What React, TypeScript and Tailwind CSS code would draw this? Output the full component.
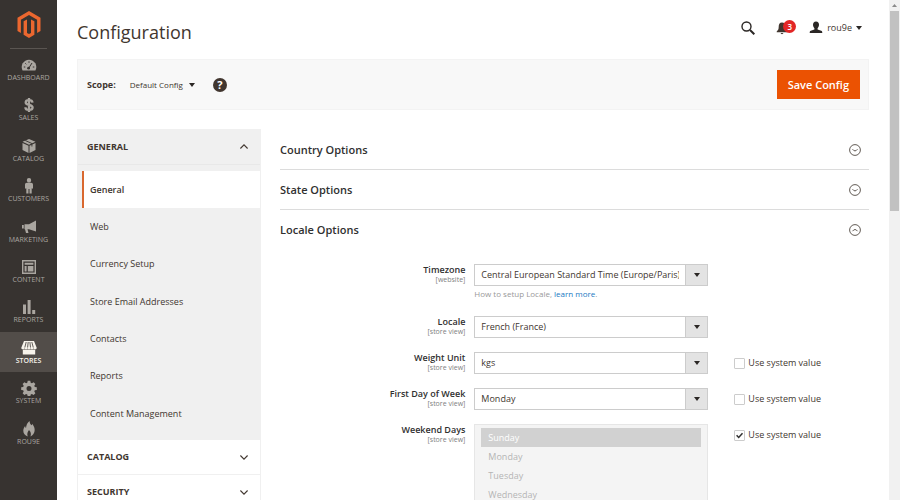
import { useState, type ReactNode } from "react";

const navItems: { label: string; icon: ReactNode }[] = [
  {
    label: "DASHBOARD",
    icon: (
      <>
        <path d="M1.600 13.500a7.300 7.300 0 1 1 12.800 0z" fill="currentColor" />
        <path d="M7.500 11.500 11 6M2.800 10h1.500M4.300 6.300l1 1M8 4.300v1.500M11.800 10h1.500" stroke="#373330" strokeWidth="1" fill="none" />
        <circle cx="7.600" cy="11.200" r="1.400" fill="#373330" />
      </>
    ),
  },
  {
    label: "SALES",
    icon: (
      <path
        d="M11.500 5.600C11.300 3.900 10 3.200 8 3.200S4.700 4 4.700 5.500C4.700 9 11.600 6.900 11.600 10.500 11.600 12.100 10.200 12.900 8 12.900S4.400 12 4.400 10.200M8 1v14"
        stroke="currentColor"
        strokeWidth="2.300"
        fill="none"
      />
    ),
  },
  {
    label: "CATALOG",
    icon: (
      <>
        <path d="M8 1l6.500 2.800L8 6.700 1.500 3.800zM1.500 5l6 2.700V15l-6-3zM14.500 5l-6 2.700V15l6-3z" fill="currentColor" />
        <path d="M4.300 2.500l6.600 3v3" stroke="#373330" strokeWidth="0.900" fill="none" />
      </>
    ),
  },
  {
    label: "CUSTOMERS",
    icon: (
      <path
        d="M8 0a2.200 2.200 0 1 1 0 4.400A2.200 2.200 0 0 1 8 0zM6 4.800h4c1.300 0 2 .8 2 2V10c0 .8-1 1-1.300.3V15.500H8.500V11h-1v4.500H5.300v-5.200C5 11 4 10.800 4 10V6.800c0-1.200.7-2 2-2z"
        fill="currentColor"
      />
    ),
  },
  {
    label: "MARKETING",
    icon: <path d="M15 1.500v11L8 10.300H6.500l1 3.700H5L4 10.300H3.500V5.200H8zM1 6h1.800v3.500H1z" fill="currentColor" />,
  },
  {
    label: "CONTENT",
    icon: (
      <>
        <path d="M1.700 1.700h12.600v12.600H1.700z" stroke="currentColor" strokeWidth="1.400" fill="none" />
        <path d="M3.600 3.800h8.800v2H3.600zM3.600 7h2v5.400h-2zM6.800 7h5.600v5.400H6.800z" fill="currentColor" />
      </>
    ),
  },
  {
    label: "REPORTS",
    icon: <path d="M2 5.500h3V15H2zM6.600 1h3v14h-3zM11.200 11h3v4h-3z" fill="currentColor" />,
  },
  {
    label: "STORES",
    icon: (
      <>
        <path d="M3 1h10l2.700 6.700c0 2-2.700 2-3.200.5-.5 1.500-2.700 1.500-3 0-.4 1.500-2.600 1.500-3 0-.3 1.500-2.500 1.500-3 0C3 9.700.3 9.700.3 7.700z" fill="currentColor" />
        <path d="M1.800 9.600h12.400v4.900H1.800z" fill="currentColor" />
        <path d="M5.200 2 3.800 7.500M7.200 2 6.600 7.500M8.900 2l.6 5.500M10.800 2l1.500 5.500" stroke="#524d49" strokeWidth="0.900" />
      </>
    ),
  },
  {
    label: "SYSTEM",
    icon: (
      <path
        fillRule="evenodd"
        d="M6.700.8h2.600l.4 2 1.200.5 1.700-1.100 1.800 1.800-1.100 1.700.5 1.200 2 .4v2.600l-2 .4-.5 1.200 1.100 1.700-1.800 1.800-1.700-1.100-1.200.5-.4 2H6.700l-.4-2-1.200-.5-1.700 1.100-1.800-1.800 1.100-1.700-.5-1.200-2-.4V7.300l2-.4.5-1.200L1.600 4l1.800-1.800 1.700 1.100 1.200-.5zM8 6a2.500 2.500 0 1 0 0 5 2.500 2.500 0 0 0 0-5z"
        fill="currentColor"
      />
    ),
  },
  {
    label: "ROU9E",
    icon: (
      <path
        d="M8.500 0c.3 2.500 1 3.300 2 4.300.4-.3.600-.8.600-1.500C13 5 14 7.500 13.600 10c-.4 2.600-1.900 4.500-4.100 5.400.8-2.400.5-4.600-1.500-6.400C6.500 11 5.800 13 6.700 15.400 4 14.700 2.300 12.600 2.300 9.800c0-2 .8-3.500 1.800-4.800.1 1 .4 1.600.9 2C5.300 4 6.200 1.700 8.500 0z"
        fill="currentColor"
      />
    ),
  },
];

function Logo() {
  return (
    <svg viewBox="0 0 24 27" className="h-[27px] w-6" fill="#eb672f" aria-label="Magento" role="img">
      <path d="M12 0 0.500 6.700v13.400l3.400 2V8.700L12 4l8.100 4.700v13.400l3.400-2V6.700z" />
      <path d="M12 27l-5.400-3.200V10.300L10 8.400v13.500l2 1.200 2-1.200V8.400l3.400 1.900v13.500z" />
    </svg>
  );
}

function Caret() {
  return (
    <svg viewBox="0 0 6 4" className="h-1 w-1.5" fill="#2b2725" aria-hidden="true">
      <path d="M0 0h6L3 4z" />
    </svg>
  );
}

function Chevron({ up = false }: { up?: boolean }) {
  return (
    <svg viewBox="0 0 8 5" className="h-[5px] w-2" fill="none" stroke="#41362f" strokeWidth="1.100" aria-hidden="true">
      <path d={up ? "M.4 4.500 4 .9l3.600 3.600" : "M.4.500 4 4.100 7.600.5"} />
    </svg>
  );
}

function SideNav() {
  return (
    <nav className="flex w-[57px] shrink-0 flex-col bg-[#373330]">
      <a href="#home" className="mx-2.5 flex h-[49px] items-center justify-center border-b border-[#5a5551]">
        <Logo />
      </a>
      <ul className="grid h-[404px] grid-rows-10">
        {navItems.map((item) => {
          const active = item.label === "STORES";
          return (
            <li key={item.label} className={active ? "bg-[#524d49] text-[#f7f3eb]" : "text-[#aaa6a0]"}>
              <a href={`#${item.label.toLowerCase()}`} className="flex h-full flex-col items-center gap-px pt-2">
                <svg viewBox="0 0 16 16" className="h-4 w-4" aria-hidden="true">
                  {item.icon}
                </svg>
                <span className={active ? "text-[7px] leading-[8px] font-semibold" : "text-[7px] leading-[8px]"}>{item.label}</span>
              </a>
            </li>
          );
        })}
      </ul>
    </nav>
  );
}

function Header() {
  return (
    <header className="flex h-[59px] items-center justify-between pr-[7px]">
      <h1 className="pt-1 text-[18px] leading-6 text-[#41362f]">Configuration</h1>
      <div className="flex items-center pb-1">
        <button type="button" aria-label="Search" className="mr-[21px]">
          <svg viewBox="0 0 14 14" className="h-3.5 w-3.5" fill="none" stroke="#2b2725">
            <circle cx="5.500" cy="5.500" r="4.500" strokeWidth="1.400" />
            <path d="M9 9l4.300 4.300" strokeWidth="2" />
          </svg>
        </button>
        <button type="button" aria-label="3 notifications" className="relative mr-[13px] h-3.5 w-5">
          <svg viewBox="0 0 12 14" className="h-3.5 w-3" fill="#41362f">
            <path d="M6 1.500c2.500 0 3.300 2 3.300 4.300 0 2.700.7 3.400 2 4.700v.8H.7v-.8c1.300-1.300 2-2 2-4.700C2.700 3.500 3.500 1.500 6 1.500zM4.700 12h2.600c0 1.500-2.600 1.500-2.600 0z" />
          </svg>
          <span className="absolute -top-px right-0 h-[13px] w-[13px] rounded-full bg-[#e22626] text-center text-[8px] leading-[13px] font-semibold text-white">3</span>
        </button>
        <button type="button" className="flex items-center text-[9px] leading-3 text-[#41362f]">
          <svg viewBox="0 0 14 13" className="mr-1 h-[13px] w-3.5" fill="#2b2725" aria-hidden="true">
            <path d="M7 .5c2 0 3 1.400 3 3.200 0 1.600-.7 2.700-1.400 3.500v1.300l3.600 1.200c.9.400 1.100 1 1.100 2.300H.7c0-1.300.2-1.900 1.100-2.300l3.600-1.200V7.200C4.700 6.400 4 5.300 4 3.700 4 1.900 5 .5 7 .5z" />
          </svg>
          <span className="mr-1">rou9e</span>
          <Caret />
        </button>
      </div>
    </header>
  );
}

function ScopeBar() {
  return (
    <div className="flex h-[51px] items-center border border-[#f3f3f3] bg-[#f8f8f8] px-2 text-[9px] text-[#41362f]">
      <span className="mr-3.5 pl-px font-bold">Scope:</span>
      <button type="button" className="mr-[18px] flex items-center gap-1.5 text-[8px]">
        Default Config
        <Caret />
      </button>
      <button type="button" aria-label="Help" className="h-3.5 w-3.5 rounded-full bg-[#41362f] text-center text-[11px] leading-[14px] font-bold text-white">
        ?
      </button>
      <button type="button" className="ml-auto h-[29px] bg-[#eb5202] px-[11px] text-[11px] leading-4 font-semibold text-white">
        Save Config
      </button>
    </div>
  );
}

const sections = ["General", "Web", "Currency Setup", "Store Email Addresses", "Contacts", "Reports", "Content Management"];

function ConfigTabs() {
  return (
    <aside className="w-[184px] shrink-0 border-x border-[#f0f0f0] text-[#41362f]">
      <div className="bg-[#f0f0f0] pb-2">
        <button type="button" className="flex h-9 w-full items-center justify-between border-b border-[#e8e8e8] pr-3 pl-[9px] text-[9px] font-bold">
          GENERAL
          <Chevron up />
        </button>
        <ul className="mt-1.5 grid h-[261px] grid-rows-7 text-[9px]">
          {sections.map((name, i) => (
            <li key={name} className={i === 0 ? "ml-1 border-l-2 border-[#d9682f] bg-white pl-1.5 font-semibold" : "pl-3"}>
              <a href={`#${name}`} className="flex h-full items-center">
                {name}
              </a>
            </li>
          ))}
        </ul>
      </div>
      {["CATALOG", "SECURITY"].map((name) => (
        <button key={name} type="button" className="flex h-[35px] w-full items-center justify-between border-b border-[#f0f0f0] pr-3 pl-[9px] text-[9px] font-bold">
          {name}
          <Chevron />
        </button>
      ))}
    </aside>
  );
}

function SectionHead({ title, open = false }: { title: string; open?: boolean }) {
  return (
    <h2 className={open ? "h-10" : "h-10 border-b border-[#dcdcdc]"}>
      <button type="button" className="flex h-full w-full items-center justify-between pr-2 text-[11px] leading-4 font-semibold text-[#303030]">
        {title}
        <svg viewBox="0 0 12 12" className="h-3 w-3" fill="none" stroke="#514943" strokeWidth="0.900" aria-hidden="true">
          <circle cx="6" cy="6" r="5.400" />
          <path d={open ? "M3.500 7.200Q6 3.800 8.500 7.200" : "M3.500 5.200Q6 8.600 8.500 5.200"} />
        </svg>
      </button>
    </h2>
  );
}

function Row({ id, label, scope, children, system }: { id: string; label: string; scope: string; children: ReactNode; system?: boolean }) {
  const [checked, setChecked] = useState(system ?? false);
  return (
    <div className="grid grid-cols-[33%_minmax(0,234px)_1fr]">
      <label htmlFor={id} className="pr-[9px] text-right text-[9px] leading-3 font-semibold text-[#303030]">
        {label}
        <span className="block text-[7px] leading-2 font-normal text-[#808080]">{scope}</span>
      </label>
      <div>{children}</div>
      {system !== undefined && (
        <label className="flex h-[22px] items-center gap-[3px] pl-[26px] text-[9px] text-[#41362f]">
          <span className="grid h-[11px] w-[11px]">
            <input
              type="checkbox"
              checked={checked}
              onChange={(e) => setChecked(e.target.checked)}
              className="col-start-1 row-start-1 h-[11px] w-[11px] appearance-none rounded-[1px] border border-[#cccccc] bg-white"
            />
            {checked && (
              <svg viewBox="0 0 11 11" className="pointer-events-none col-start-1 row-start-1 h-[11px] w-[11px]" fill="none" stroke="#303030" strokeWidth="1.500" aria-hidden="true">
                <path d="M2.600 5.300l2.100 2.200 3.800-4.200" />
              </svg>
            )}
          </span>
          Use system value
        </label>
      )}
    </div>
  );
}

function Select({ id, value }: { id: string; value: string }) {
  return (
    <div className="grid grid-cols-[1fr_23px]">
      <select id={id} className="col-span-2 col-start-1 row-start-1 h-[22px] w-full appearance-none border border-[#cccccc] bg-white pr-7 pl-1.5 text-[9px] text-[#41362f]">
        <option>{value}</option>
      </select>
      <span className="pointer-events-none z-10 col-start-2 row-start-1 flex items-center justify-center border border-[#cccccc] bg-[#e3e3e3]">
        <Caret />
      </span>
    </div>
  );
}

const days = ["Sunday", "Monday", "Tuesday", "Wednesday", "Thursday", "Friday", "Saturday"];

function Settings() {
  return (
    <section className="min-w-0 flex-1 pt-px">
      <SectionHead title="Country Options" />
      <SectionHead title="State Options" />
      <SectionHead title="Locale Options" open />
      <div className="flex flex-col gap-3.5 pt-3.5">
        <div className="pb-0.5">
          <Row id="timezone" label="Timezone" scope="[website]">
            <Select id="timezone" value="Central European Standard Time (Europe/Paris)" />
            <p className="pt-0.5 text-[8px] leading-3 text-[#999999]">
              How to setup Locale,{" "}
              <a href="#learn" className="text-[#1979c3]">
                learn more
              </a>
              .
            </p>
          </Row>
        </div>
        <Row id="locale" label="Locale" scope="[store view]">
          <Select id="locale" value="French (France)" />
        </Row>
        <Row id="weight" label="Weight Unit" scope="[store view]" system={false}>
          <Select id="weight" value="kgs" />
        </Row>
        <Row id="firstday" label="First Day of Week" scope="[store view]" system={false}>
          <Select id="firstday" value="Monday" />
        </Row>
        <Row id="weekend" label="Weekend Days" scope="[store view]" system>
          <select
            id="weekend"
            multiple
            disabled
            size={7}
            defaultValue={["Sunday"]}
            className="h-[142px] w-full appearance-none overflow-hidden border border-[#e6e6e6] bg-[#f4f4f4] px-1.5 py-[3px] text-[9px]"
          >
            {days.map((day) => (
              <option
                key={day}
                className="h-[19px] px-[7px] pt-[3px] pb-0 text-[#b5b5b5] checked:bg-linear-to-r checked:from-[#d1d1d1] checked:to-[#d1d1d1] checked:text-white"
              >
                {day}
              </option>
            ))}
          </select>
        </Row>
      </div>
    </section>
  );
}

function ScrollTrack() {
  return (
    <div className="flex w-[11px] shrink-0 flex-col items-center bg-[#f1f1f1]" aria-hidden="true">
      <svg viewBox="0 0 11 11" className="h-[11px] w-[11px] shrink-0" fill="#8a8a8a">
        <path d="M3 7l2.500-3L8 7z" />
      </svg>
      <div className="h-2/5 w-[9px] bg-[#c1c1c1]" />
    </div>
  );
}

export default function App() {
  return (
    <div className="flex h-screen overflow-hidden bg-white font-['Open_Sans','Noto_Sans',sans-serif]">
      <SideNav />
      <main className="min-w-0 flex-1 overflow-hidden px-5">
        <Header />
        <ScopeBar />
        <div className="flex gap-[19px] pt-[19px]">
          <ConfigTabs />
          <Settings />
        </div>
      </main>
      <ScrollTrack />
    </div>
  );
}
